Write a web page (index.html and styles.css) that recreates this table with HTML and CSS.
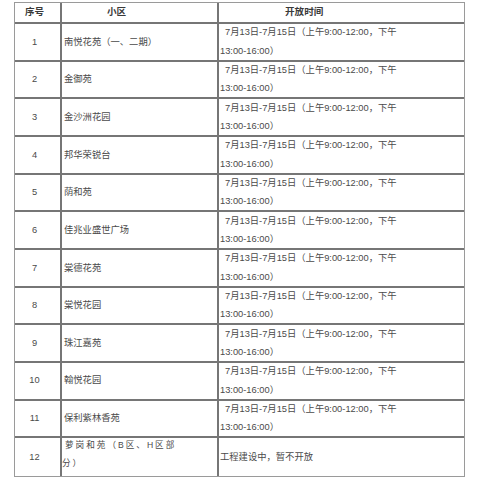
FILE: index.html
```html
<!DOCTYPE html>
<html lang="zh-CN">
<head>
<meta charset="utf-8">
<title>开放时间</title>
<link rel="stylesheet" href="styles.css">
</head>
<body>
<div class="grid">
  <div class="cell head c1">序号</div>
  <div class="cell head c2">小区</div>
  <div class="cell head c3">开放时间</div>

  <div class="cell num">1</div>
  <div class="cell name">南悦花苑（一、二期）</div>
  <div class="cell time"><div class="l1">7月13日-7月15日（上午9:00-12:00，下午</div><div>13:00-16:00）</div></div>

  <div class="cell num">2</div>
  <div class="cell name">金御苑</div>
  <div class="cell time"><div class="l1">7月13日-7月15日（上午9:00-12:00，下午</div><div>13:00-16:00）</div></div>

  <div class="cell num">3</div>
  <div class="cell name">金沙洲花园</div>
  <div class="cell time"><div class="l1">7月13日-7月15日（上午9:00-12:00，下午</div><div>13:00-16:00）</div></div>

  <div class="cell num">4</div>
  <div class="cell name">邦华荣锐台</div>
  <div class="cell time"><div class="l1">7月13日-7月15日（上午9:00-12:00，下午</div><div>13:00-16:00）</div></div>

  <div class="cell num">5</div>
  <div class="cell name">荫和苑</div>
  <div class="cell time"><div class="l1">7月13日-7月15日（上午9:00-12:00，下午</div><div>13:00-16:00）</div></div>

  <div class="cell num">6</div>
  <div class="cell name">佳兆业盛世广场</div>
  <div class="cell time"><div class="l1">7月13日-7月15日（上午9:00-12:00，下午</div><div>13:00-16:00）</div></div>

  <div class="cell num">7</div>
  <div class="cell name">棠德花苑</div>
  <div class="cell time"><div class="l1">7月13日-7月15日（上午9:00-12:00，下午</div><div>13:00-16:00）</div></div>

  <div class="cell num">8</div>
  <div class="cell name">棠悦花园</div>
  <div class="cell time"><div class="l1">7月13日-7月15日（上午9:00-12:00，下午</div><div>13:00-16:00）</div></div>

  <div class="cell num">9</div>
  <div class="cell name">珠江嘉苑</div>
  <div class="cell time"><div class="l1">7月13日-7月15日（上午9:00-12:00，下午</div><div>13:00-16:00）</div></div>

  <div class="cell num">10</div>
  <div class="cell name">翰悦花园</div>
  <div class="cell time"><div class="l1">7月13日-7月15日（上午9:00-12:00，下午</div><div>13:00-16:00）</div></div>

  <div class="cell num">11</div>
  <div class="cell name">保利紫林香苑</div>
  <div class="cell time"><div class="l1">7月13日-7月15日（上午9:00-12:00，下午</div><div>13:00-16:00）</div></div>

  <div class="cell num">12</div>
  <div class="cell name spaced"><div class="s1">萝岗和苑（B区、H区部</div><div>分）</div></div>
  <div class="cell time"><div>工程建设中，暂不开放</div></div>
</div>
</body>
</html>
```
FILE: styles.css
```css
html, body {
  margin: 0;
  padding: 0;
  background: #ffffff;
}

body {
  font-family: "Liberation Sans", "Noto Sans CJK SC", sans-serif;
  font-size: 9.3px;
  color: #4a4a4a;
}

.grid {
  margin: 2px 0 0 14px;
  width: 449px;
  display: grid;
  grid-template-columns: 45px 155px 245px;
  grid-template-rows: 19px repeat(11, 35.67px) 37.3px;
  gap: 2px;
  background: #767676;
  border: 1px solid #9a9a9a;
}

.cell {
  background: #ffffff;
  display: flex;
  flex-direction: column;
  justify-content: center;
  line-height: 18.5px;
  white-space: nowrap;
  overflow: hidden;
}

.head {
  font-weight: bold;
  color: #3a3a3a;
  font-size: 9.6px;
}

.head.c1 {
  align-items: center;
  padding-right: 6px;
}

.head.c2 {
  padding-left: 45px;
}

.head.c3 {
  padding-left: 66px;
}

.num {
  align-items: center;
  padding-right: 6px;
}

.name {
  padding-left: 2px;
}

.spaced {
  padding-left: 0;
  padding-bottom: 5px;
  font-size: 8.6px;
  letter-spacing: 2px;
}

.spaced .s1 {
  padding-left: 3px;
}

.time {
  padding-left: 1px;
}

.time .l1 {
  padding-left: 5px;
}
```
